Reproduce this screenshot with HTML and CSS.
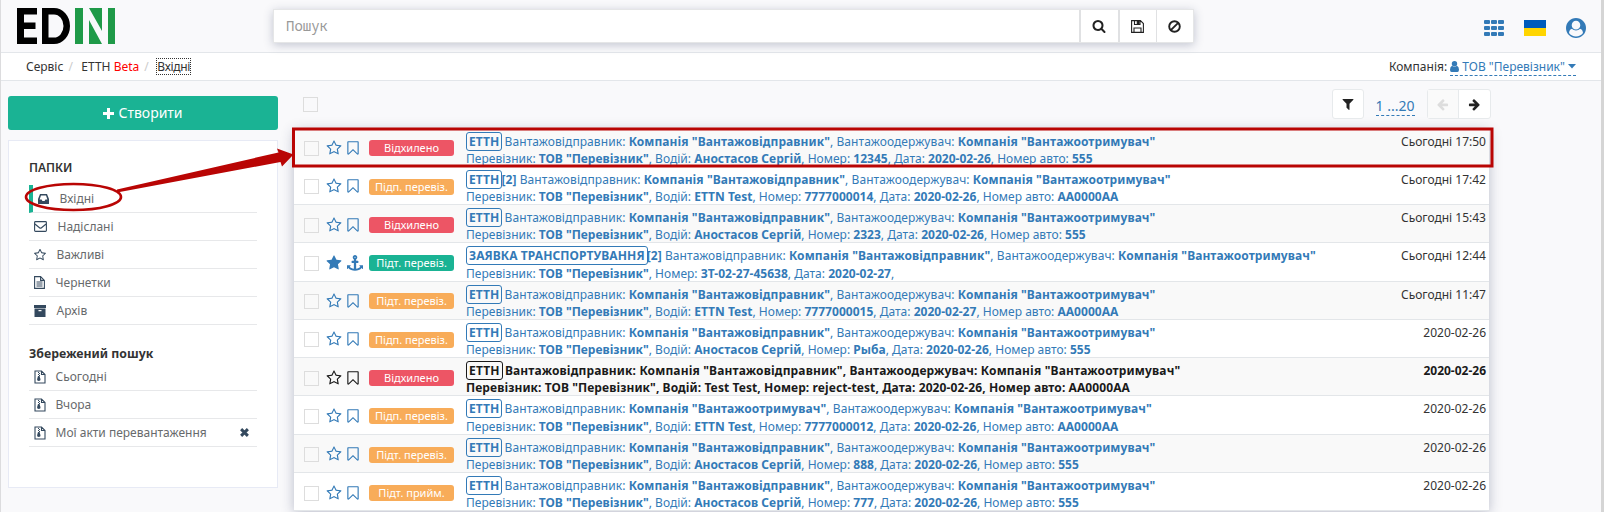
FILE: index.html
```html
<!DOCTYPE html>
<html lang="uk">
<head>
<meta charset="utf-8">
<title>EDIN</title>
<link rel="stylesheet" href="styles.css">
</head>
<body>
<svg class="defs" width="0" height="0">
<symbol id="star-o" viewBox="0 0 1792 1792"><path d="M1201 1004l306-297-422-62-189-382-189 382-422 62 306 297-73 421 378-199 377 199zm527-357q0 22-26 48l-363 354 86 500q1 7 1 20 0 50-41 50-19 0-40-12l-449-236-449 236q-22 12-40 12-21 0-31.500-14.500t-10.500-35.500q0-6 2-20l86-500-364-354q-25-27-25-48 0-37 56-46l502-73 225-455q19-41 49-41t49 41l225 455 502 73q56 9 56 46z"/></symbol>
<symbol id="star" viewBox="0 0 1792 1792"><path d="M1728 647q0 22-26 48l-363 354 86 500q1 7 1 20 0 21-10.500 35.500t-30.500 14.500q-19 0-40-12l-449-236-449 236q-22 12-40 12-21 0-31.500-14.500t-10.500-35.500q0-6 2-20l86-500-364-354q-25-27-25-48 0-37 56-46l502-73 225-455q19-41 49-41t49 41l225 455 502 73q56 9 56 46z"/></symbol>
<symbol id="bookmark" viewBox="0 0 1792 1792"><path d="M1408 256h-1024v1242l423-406 89-85 89 85 423 406v-1242zm12-128q23 0 44 9 33 13 52.500 41t19.500 62v1289q0 34-19.500 62t-52.500 41q-19 8-44 8-48 0-83-32l-441-424-441 424q-36 33-83 33-23 0-44-9-33-13-52.500-41t-19.500-62v-1289q0-34 19.500-62t52.500-41q21-9 44-9h1048z"/></symbol>
<symbol id="anchor" viewBox="0 0 1792 1792"><path d="M960 256q0-26-19-45t-45-19-45 19-19 45 19 45 45 19 45-19 19-45zm832 928v352q0 22-20 30-8 2-12 2-12 0-23-9l-93-93q-119 143-318.500 226.500t-429.500 83.500-429.500-83.500-318.500-226.500l-93 93q-9 9-23 9-4 0-12-2-20-8-20-30v-352q0-14 9-23t23-9h352q22 0 30 20 8 19-7 35l-100 100q67 91 189.500 153.500t271.500 82.500v-647h-192q-26 0-45-19t-19-45v-128q0-26 19-45t45-19h192v-163q-58-34-93-92.500t-35-128.500q0-106 75-181t181-75 181 75 75 181q0 70-35 128.500t-93 92.500v163h192q26 0 45 19t19 45v128q0 26-19 45t-45 19h-192v647q149-20 271.500-82.500t189.500-153.500l-100-100q-15-16-7-35 8-20 30-20h352q14 0 23 9t9 23z"/></symbol>
<symbol id="search" viewBox="0 0 1792 1792"><path d="M1216 832q0-185-131.500-316.500t-316.500-131.500-316.500 131.500-131.500 316.500 131.500 316.500 316.500 131.500 316.500-131.500 131.500-316.500zm512 832q0 52-38 90t-90 38q-54 0-90-38l-343-342q-179 124-399 124-143 0-273.500-55.500t-225-150-150-225-55.500-273.500 55.500-273.500 150-225 225-150 273.500-55.500 273.500 55.500 225 150 150 225 55.500 273.500q0 220-124 399l343 343q37 37 37 90z"/></symbol>
<symbol id="arrow" viewBox="0 0 1792 1792"><path d="M1600 960q0 54-37 91l-651 651q-39 37-91 37-51 0-90-37l-75-75q-38-38-38-91t38-91l293-293h-704q-52 0-84.500-37.500t-32.500-90.500v-128q0-53 32.500-90.500t84.500-37.500h704l-293-294q-38-36-38-90t38-90l75-75q38-38 90-38 53 0 91 38l651 651q37 35 37 90z"/></symbol>
<symbol id="filter" viewBox="0 0 1792 1792"><path d="M1595 295q17 41-14 70l-493 493v742q0 42-39 59-13 5-25 5-27 0-45-19l-256-256q-19-19-19-45v-486l-493-493q-31-29-14-70 17-39 59-39h1280q42 0 59 39z"/></symbol>
<symbol id="zip" viewBox="0 0 12 14"><path d="M1 1h6.500l3.500 3.500v8.500h-10zM7.500 1v3.500h3.500" fill="none" stroke="currentColor" stroke-width="1.1"/><path d="M4 2h1v1h-1zM5 3h1v1h-1zM4 4h1v1h-1zM5 5h1v1h-1zM4 6h1.500l1 3.200q.3 1.800-1.700 1.800t-1.700-1.800z"/></symbol>
</svg>

<header class="top">
  <svg class="logo" width="100" height="37" viewBox="0 0 100 37">
    <path d="M0 0h20v6.500h-13v8h11.500v6.500h-11.500v8.500h13v6.500h-20z"/>
    <path fill-rule="evenodd" d="M25 0h12a16 18 0 0 1 0 36h-12zM31.500 6.500v23h5.500a9.500 11.500 0 0 0 0-23z"/>
    <path class="green" d="M58 0h8v36h-8zM91 0h7v36h-7zM72 0h13v23zM72 12l13 24h-13z"/>
  </svg>
  <div class="search">
    <span class="query">Пошук</span>
    <span class="sbtn s1"><svg width="14" height="14"><use href="#search"/></svg></span>
    <span class="sbtn s2"><svg width="13" height="13" viewBox="0 0 13 13" fill="none" stroke="currentColor" stroke-width="1.1"><path d="M.6.6h8.800l3 3v8.800h-11.800zM3 12.400v-4.400h7v4.400M3.500.6v3.900h5.500v-3.900"/><path d="M6.300 1h1.700v3h-1.700z" fill="currentColor"/></svg></span>
    <span class="sbtn s3"><svg width="13" height="13" viewBox="0 0 13 13" fill="none" stroke="currentColor" stroke-width="1.900"><circle cx="6.500" cy="6.500" r="5.300"/><path d="M10.200 2.800l-7.400 7.400"/></svg></span>
  </div>
  <div class="tools">
    <svg width="20" height="16" viewBox="0 0 20 16"><path d="M1 0h4q1 0 1 1v2q0 1-1 1h-4q-1 0-1-1v-2q0-1 1-1zm7 0h4q1 0 1 1v2q0 1-1 1h-4q-1 0-1-1v-2q0-1 1-1zm7 0h4q1 0 1 1v2q0 1-1 1h-4q-1 0-1-1v-2q0-1 1-1zM1 6h4q1 0 1 1v2q0 1-1 1h-4q-1 0-1-1v-2q0-1 1-1zm7 0h4q1 0 1 1v2q0 1-1 1h-4q-1 0-1-1v-2q0-1 1-1zm7 0h4q1 0 1 1v2q0 1-1 1h-4q-1 0-1-1v-2q0-1 1-1zM1 12h4q1 0 1 1v2q0 1-1 1h-4q-1 0-1-1v-2q0-1 1-1zm7 0h4q1 0 1 1v2q0 1-1 1h-4q-1 0-1-1v-2q0-1 1-1zm7 0h4q1 0 1 1v2q0 1-1 1h-4q-1 0-1-1v-2q0-1 1-1z"/></svg>
    <span class="flag"></span>
    <svg width="20" height="20" viewBox="0 0 1792 1792"><path fill-rule="evenodd" d="M1523 1339q-22-155-87.500-257.500t-184.500-118.500q-67 74-159.500 115.500t-195.500 41.500-195.500-41.500-159.500-115.500q-119 16-184.500 118.500t-87.500 257.500q106 150 271 237.500t356 87.500 356-87.500 271-237.500zm-243-699q0-159-112.500-271.500t-271.500-112.500-271.500 112.500-112.500 271.500 112.500 271.500 271.500 112.500 271.500-112.500 112.500-271.500zm512 256q0 182-71 347.500t-190.500 286-285.500 191.500-349 71q-182 0-348-71t-286-191-191-286-71-348 71-348 191-286 286-191 348-71 348 71 286 191 191 286 71 348z"/></svg>
  </div>
</header>

<nav class="crumbs">
  <span>Сервіс</span><i>/</i><span>ЕТТН <b>Beta</b></span><i>/</i><span class="focus">Вхідні</span>
  <div class="company">Компанія: <a><svg width="9" height="11" viewBox="0 0 9 11"><circle cx="4.500" cy="2.800" r="2.700"/><path d="M2 4.800q2.500 2 5 0q2 .8 2 4q0 2.200-1.600 2.200h-5.800q-1.600 0-1.600-2.200q0-3.200 2-4z"/></svg> ТОВ "Перевізник" <svg width="8" height="5" viewBox="0 0 8 5"><path d="M0 0h8l-4 4.500z"/></svg></a></div>
</nav>

<main class="page">
  <aside class="side">
    <div class="create"><svg width="11" height="11" viewBox="0 0 11 11"><path d="M4 0h3v4h4v3h-4v4h-3v-4h-4v-3h4z"/></svg> Створити</div>
    <div class="panel">
      <h3>ПАПКИ</h3>
      <ul>
        <li class="active"><svg width="11" height="10" viewBox="0 0 11 10"><path fill-rule="evenodd" d="M2 0h7l2 5v4.500q0 .5-.5.500h-10q-.5 0-.5-.500v-4.500zM3 1.500l-1.400 4h2l.8 1.500h2.200l.8-1.500h2l-1.400-4z"/></svg><span>Вхідні</span></li>
        <li><svg width="13" height="11" viewBox="0 0 13 11" fill="none" stroke="currentColor" stroke-width="1.100"><path d="M1.500.6h10q.9 0 .9.900v8q0 .9-.9.900h-10q-.9 0-.9-.900v-8q0-.9.900-.9zM.6 2.800l4.900 3.900q1 .8 2 0l4.900-3.900"/></svg><span>Надіслані</span></li>
        <li><svg width="12" height="12" viewBox="64 64 1664 1664"><path d="M1201 1004l306-297-422-62-189-382-189 382-422 62 306 297-73 421 378-199 377 199zm527-357q0 22-26 48l-363 354 86 500q1 7 1 20 0 50-41 50-19 0-40-12l-449-236-449 236q-22 12-40 12-21 0-31.500-14.500t-10.500-35.500q0-6 2-20l86-500-364-354q-25-27-25-48 0-37 56-46l502-73 225-455q19-41 49-41t49 41l225 455 502 73q56 9 56 46z"/></svg><span>Важливі</span></li>
        <li><svg width="11" height="13" viewBox="0 0 11 13" fill="none" stroke="currentColor" stroke-width="1.100"><path d="M.6.6h6l3.800 3.800v8h-9.800zM6.600.6v3.800h3.800M2.500 6h6M2.500 8h6M2.500 10h6"/></svg><span>Чернетки</span></li>
        <li><svg width="12" height="12" viewBox="0 0 12 12"><path fill-rule="evenodd" d="M0 0h12v3h-12zM.5 3.600h11v8.400h-11zM4.500 5h3v1.200h-3z"/></svg><span>Архів</span></li>
      </ul>
      <h3 class="saved">Збережений пошук</h3>
      <ul>
        <li><svg width="12" height="14"><use href="#zip"/></svg><span>Сьогодні</span></li>
        <li><svg width="12" height="14"><use href="#zip"/></svg><span>Вчора</span></li>
        <li><svg width="12" height="14"><use href="#zip"/></svg><span>Мої акти перевантаження</span><svg class="del" width="9" height="9" viewBox="0 0 8 8"><path d="M1 1l6 6M7 1l-6 6" stroke="currentColor" stroke-width="2.600"/></svg></li>
      </ul>
    </div>
  </aside>

  <section class="content">
    <div class="bar">
      <span class="check"></span>
      <span class="btn"><svg width="14" height="14"><use href="#filter"/></svg></span>
      <a class="range">1 ...20</a>
      <span class="pager"><span class="off"><svg class="flip" width="13" height="13"><use href="#arrow"/></svg></span><span><svg width="13" height="13"><use href="#arrow"/></svg></span></span>
    </div>
    <div class="list">
      <div class="row"><span class="check"></span><svg class="ic"><use href="#star-o"/></svg><svg class="ic"><use href="#bookmark"/></svg><em class="tag red">Відхилено</em><p><b class="doc">ЕТТН</b> Вантажовідправник: <b>Компанія "Вантажовідправник"</b>, Вантажоодержувач: <b>Компанія "Вантажоотримувач"</b><br>Перевізник: <b>ТОВ "Перевізник"</b>, Водій: <b>Аностасов Сергій</b>, Номер: <b>12345</b>, Дата: <b>2020-02-26</b>, Номер авто: <b>555</b></p><time>Сьогодні 17:50</time></div>
      <div class="row"><span class="check"></span><svg class="ic"><use href="#star-o"/></svg><svg class="ic"><use href="#bookmark"/></svg><em class="tag orange">Підп. перевіз.</em><p><b class="doc">ЕТТН</b><b>[2]</b> Вантажовідправник: <b>Компанія "Вантажовідправник"</b>, Вантажоодержувач: <b>Компанія "Вантажоотримувач"</b><br>Перевізник: <b>ТОВ "Перевізник"</b>, Водій: <b>ETTN Test</b>, Номер: <b>7777000014</b>, Дата: <b>2020-02-26</b>, Номер авто: <b>АА0000АА</b></p><time>Сьогодні 17:42</time></div>
      <div class="row"><span class="check"></span><svg class="ic"><use href="#star-o"/></svg><svg class="ic"><use href="#bookmark"/></svg><em class="tag red">Відхилено</em><p><b class="doc">ЕТТН</b> Вантажовідправник: <b>Компанія "Вантажовідправник"</b>, Вантажоодержувач: <b>Компанія "Вантажоотримувач"</b><br>Перевізник: <b>ТОВ "Перевізник"</b>, Водій: <b>Аностасов Сергій</b>, Номер: <b>2323</b>, Дата: <b>2020-02-26</b>, Номер авто: <b>555</b></p><time>Сьогодні 15:43</time></div>
      <div class="row"><span class="check"></span><svg class="ic"><use href="#star"/></svg><svg class="ic anchor"><use href="#anchor"/></svg><em class="tag teal">Підт. перевіз.</em><p><b class="doc">ЗАЯВКА ТРАНСПОРТУВАННЯ</b><b>[2]</b> Вантажовідправник: <b>Компанія "Вантажовідправник"</b>, Вантажоодержувач: <b>Компанія "Вантажоотримувач"</b><br>Перевізник: <b>ТОВ "Перевізник"</b>, Номер: <b>ЗТ-02-27-45638</b>, Дата: <b>2020-02-27</b>,</p><time>Сьогодні 12:44</time></div>
      <div class="row"><span class="check"></span><svg class="ic"><use href="#star-o"/></svg><svg class="ic"><use href="#bookmark"/></svg><em class="tag orange">Підт. перевіз.</em><p><b class="doc">ЕТТН</b> Вантажовідправник: <b>Компанія "Вантажовідправник"</b>, Вантажоодержувач: <b>Компанія "Вантажоотримувач"</b><br>Перевізник: <b>ТОВ "Перевізник"</b>, Водій: <b>ETTN Test</b>, Номер: <b>7777000015</b>, Дата: <b>2020-02-27</b>, Номер авто: <b>АА0000АА</b></p><time>Сьогодні 11:47</time></div>
      <div class="row"><span class="check"></span><svg class="ic"><use href="#star-o"/></svg><svg class="ic"><use href="#bookmark"/></svg><em class="tag orange">Підп. перевіз.</em><p><b class="doc">ЕТТН</b> Вантажовідправник: <b>Компанія "Вантажовідправник"</b>, Вантажоодержувач: <b>Компанія "Вантажоотримувач"</b><br>Перевізник: <b>ТОВ "Перевізник"</b>, Водій: <b>Аностасов Сергій</b>, Номер: <b>Рыба</b>, Дата: <b>2020-02-26</b>, Номер авто: <b>555</b></p><time>2020-02-26</time></div>
      <div class="row unread"><span class="check"></span><svg class="ic"><use href="#star-o"/></svg><svg class="ic"><use href="#bookmark"/></svg><em class="tag red">Відхилено</em><p><b class="doc">ЕТТН</b> Вантажовідправник: Компанія "Вантажовідправник", Вантажоодержувач: Компанія "Вантажоотримувач"<br>Перевізник: ТОВ "Перевізник", Водій: Test Test, Номер: reject-test, Дата: 2020-02-26, Номер авто: АА0000АА</p><time>2020-02-26</time></div>
      <div class="row"><span class="check"></span><svg class="ic"><use href="#star-o"/></svg><svg class="ic"><use href="#bookmark"/></svg><em class="tag orange">Підп. перевіз.</em><p><b class="doc">ЕТТН</b> Вантажовідправник: <b>Компанія "Вантажоотримувач"</b>, Вантажоодержувач: <b>Компанія "Вантажоотримувач"</b><br>Перевізник: <b>ТОВ "Перевізник"</b>, Водій: <b>ETTN Test</b>, Номер: <b>7777000012</b>, Дата: <b>2020-02-26</b>, Номер авто: <b>АА0000АА</b></p><time>2020-02-26</time></div>
      <div class="row"><span class="check"></span><svg class="ic"><use href="#star-o"/></svg><svg class="ic"><use href="#bookmark"/></svg><em class="tag orange">Підт. перевіз.</em><p><b class="doc">ЕТТН</b> Вантажовідправник: <b>Компанія "Вантажовідправник"</b>, Вантажоодержувач: <b>Компанія "Вантажоотримувач"</b><br>Перевізник: <b>ТОВ "Перевізник"</b>, Водій: <b>Аностасов Сергій</b>, Номер: <b>888</b>, Дата: <b>2020-02-26</b>, Номер авто: <b>555</b></p><time>2020-02-26</time></div>
      <div class="row"><span class="check"></span><svg class="ic"><use href="#star-o"/></svg><svg class="ic"><use href="#bookmark"/></svg><em class="tag orange">Підт. прийм.</em><p><b class="doc">ЕТТН</b> Вантажовідправник: <b>Компанія "Вантажовідправник"</b>, Вантажоодержувач: <b>Компанія "Вантажоотримувач"</b><br>Перевізник: <b>ТОВ "Перевізник"</b>, Водій: <b>Аностасов Сергій</b>, Номер: <b>777</b>, Дата: <b>2020-02-26</b>, Номер авто: <b>555</b></p><time>2020-02-26</time></div>
    </div>
  </section>
</main>

<svg class="marks" width="1604" height="512" viewBox="0 0 1604 512">
  <rect x="293.500" y="129" width="1198.500" height="37" fill="none" stroke="#b90504" stroke-width="3"/>
  <ellipse cx="73.500" cy="197" rx="47.500" ry="13" fill="none" stroke="#b90504" stroke-width="2.600"/>
  <path d="M117 189.500L278.500 152.500L277 148.500L293.500 154.500L282 166.500L280.500 162L117 192.500z" fill="#b90504"/>
</svg>
</body>
</html>
```

FILE: styles.css
```css
* { box-sizing: border-box; }
html { height: 100%; overflow: hidden; }
body {
  margin: 0;
  height: 512px;
  overflow: hidden;
  background: #f9f9fb;
  border-left: 1px solid #dcdcde;
  border-right: 3px solid #d5d5d5;
  color: #333;
  font: 12px/18px "Noto Sans", "Open Sans", sans-serif;
}
svg { flex: none; display: block; }
svg:not([fill]) { fill: currentColor; }
.defs { position: absolute; }
.top {
  height: 53px;
  display: flex;
  border-bottom: 1px solid #e3e6ea;
}
.logo { margin: 8px 0 0 16px; color: #000; }
.logo .green { fill: #1f9a48; }
.search {
  display: flex;
  width: 921px;
  height: 34px;
  margin: 9px 0 0 156px;
  background: #fff;
  border: 1px solid #e5e6e7;
  box-shadow: 0 2px 9px rgba(40, 50, 90, .26);
}
.query {
  flex: 1;
  padding-left: 12px;
  font: 14px/32px "Noto Sans Mono", "DejaVu Sans Mono", monospace;
  color: #999;
}
.sbtn { display: flex; align-items: center; justify-content: center; border-left: 1px solid #e0e1e3; color: #222; }
.s1 { width: 39px; border-left-width: 2px; padding-right: 2px; }
.s2 { width: 38px; border-left-width: 2px; padding-right: 1px; }
.s3 { width: 37px; padding-right: 1px; }
.tools {
  display: flex;
  align-items: center;
  gap: 20px;
  margin: 4px 15px 0 auto;
  color: #337ab7;
}
.flag { width: 22px; height: 16px; background: linear-gradient(#005bbb 50%, #ffd500 50%); }
.crumbs {
  display: flex;
  height: 28px;
  padding: 0 25px 0 25px;
  line-height: 27px;
  background: #fff;
  border-bottom: 1px solid #e3e6ea;
}
.crumbs i { font-style: normal; color: #ccc; margin: 0 8.500px 0 5px; }
.crumbs b { font-weight: 400; color: #f00; }
.crumbs .focus { height: 15px; margin-top: 6px; line-height: 15px; letter-spacing: -.3px; outline: 1px dotted #333; }
.company { margin-left: auto; }
.company a { display: inline-block; height: 23px; color: #337ab7; border-bottom: 1px dashed #337ab7; }
.company svg { display: inline-block; vertical-align: -1px; }
.company svg:last-child { vertical-align: 2px; }
.page { display: flex; padding-left: 7px; }
.side { width: 270px; padding-top: 15px; }
.create {
  display: flex;
  align-items: center;
  justify-content: center;
  gap: 4px;
  height: 34px;
  margin-bottom: 10px;
  border-radius: 3px;
  background: #1ab394;
  color: #fff;
  font-size: 14px;
}
.panel { height: 348px; padding: 18px 20px; background: #fff; border: 1px solid #e7eaf5; }
.panel h3 { margin: 0; font: 600 12px/18px "Noto Sans", "Open Sans", sans-serif; }
.panel h3.saved { margin-top: 20px; font-size: 12.300px; font-weight: 700; }
.panel ul { list-style: none; margin: 8px 0 0; padding: 0; }
.saved + ul { margin-top: 0; }
.panel li { display: flex; align-items: center; height: 28px; padding-left: 5px; border-bottom: 1px solid #e7e8ea; color: #34495e; }
.panel li span { margin-left: 10.500px; color: #676a6c; }
.panel .saved + ul span { margin-left: 9.500px; }
.panel li.active { border-left: 4px solid #1ab394; }
.panel .del { margin: 0 8px 0 auto; }
.content { margin-left: 16px; width: 1195px; }
.bar { display: flex; height: 47.500px; padding: 8px 0 0 9px; }
.check { width: 15px; height: 15px; flex: none; border: 1px solid #ddd; }
.bar .check { margin-top: 8px; }
.btn { margin-left: auto; }
.btn, .pager { display: flex; height: 30px; border: 1px solid #e7eaec; border-radius: 3px; background: #fff; color: #222; }
.btn { width: 32px; align-items: center; justify-content: center; }
.pager span { display: flex; width: 31px; align-items: center; justify-content: center; }
.pager .off { color: #ddd; background: #fafafa; border-right: 1px solid #e7eaec; }
.pager { margin-right: -1.500px; }
.flip { transform: scaleX(-1); }
.range { height: 21px; margin: 6px 12px 0; font-size: 14px; line-height: 22px; color: #337ab7; border-bottom: 1px dashed #337ab7; }
.list { box-shadow: 0 2px 12px rgba(40, 50, 90, .3); }
.row {
  display: flex;
  height: 38.290px;
  padding: 0 3px 0 10px;
  border-bottom: 1px solid #e3e6e9;
  background: #fff;
  color: #337ab7;
}
.row:nth-child(odd) { background: #f9f9f9; }
.row .check { margin: 12.500px 6.500px 0 0; }
.ic { width: 16px; height: 16px; margin-top: 11.500px; margin-right: 3px; }
.anchor { position: relative; left: 2px; }
.tag {
  width: 85px;
  height: 16px;
  margin: 11.750px 12px 0 5.500px;
  border-radius: 3px;
  color: #fff;
  font: normal 11px/16px "Noto Sans", "Open Sans", sans-serif;
  text-align: center;
}
.red { background: #ed5565; }
.orange { background: #f8ac59; }
.teal { background: #1ab394; }
.row p { margin: 4px 0 0; line-height: 17.250px; white-space: nowrap; letter-spacing: .015px; }
.row p::first-line { letter-spacing: .08px; }
.row b { font-weight: 700; }
.row .doc { margin-right: -1px; padding: 0 2px; border: 1px solid #337ab7; border-radius: 3px; }
.row time { margin: 4px 0 0 auto; line-height: 17.250px; color: #333; }
.unread, .row.unread, .row.unread time { color: #1a1a1a; font-weight: 700; }
.row.unread p { letter-spacing: .09px; }
.row.unread p::first-line { letter-spacing: .15px; }
.row.unread .doc { border-color: #1a1a1a; }
.marks { position: absolute; left: 0; top: 0; pointer-events: none; }
```
